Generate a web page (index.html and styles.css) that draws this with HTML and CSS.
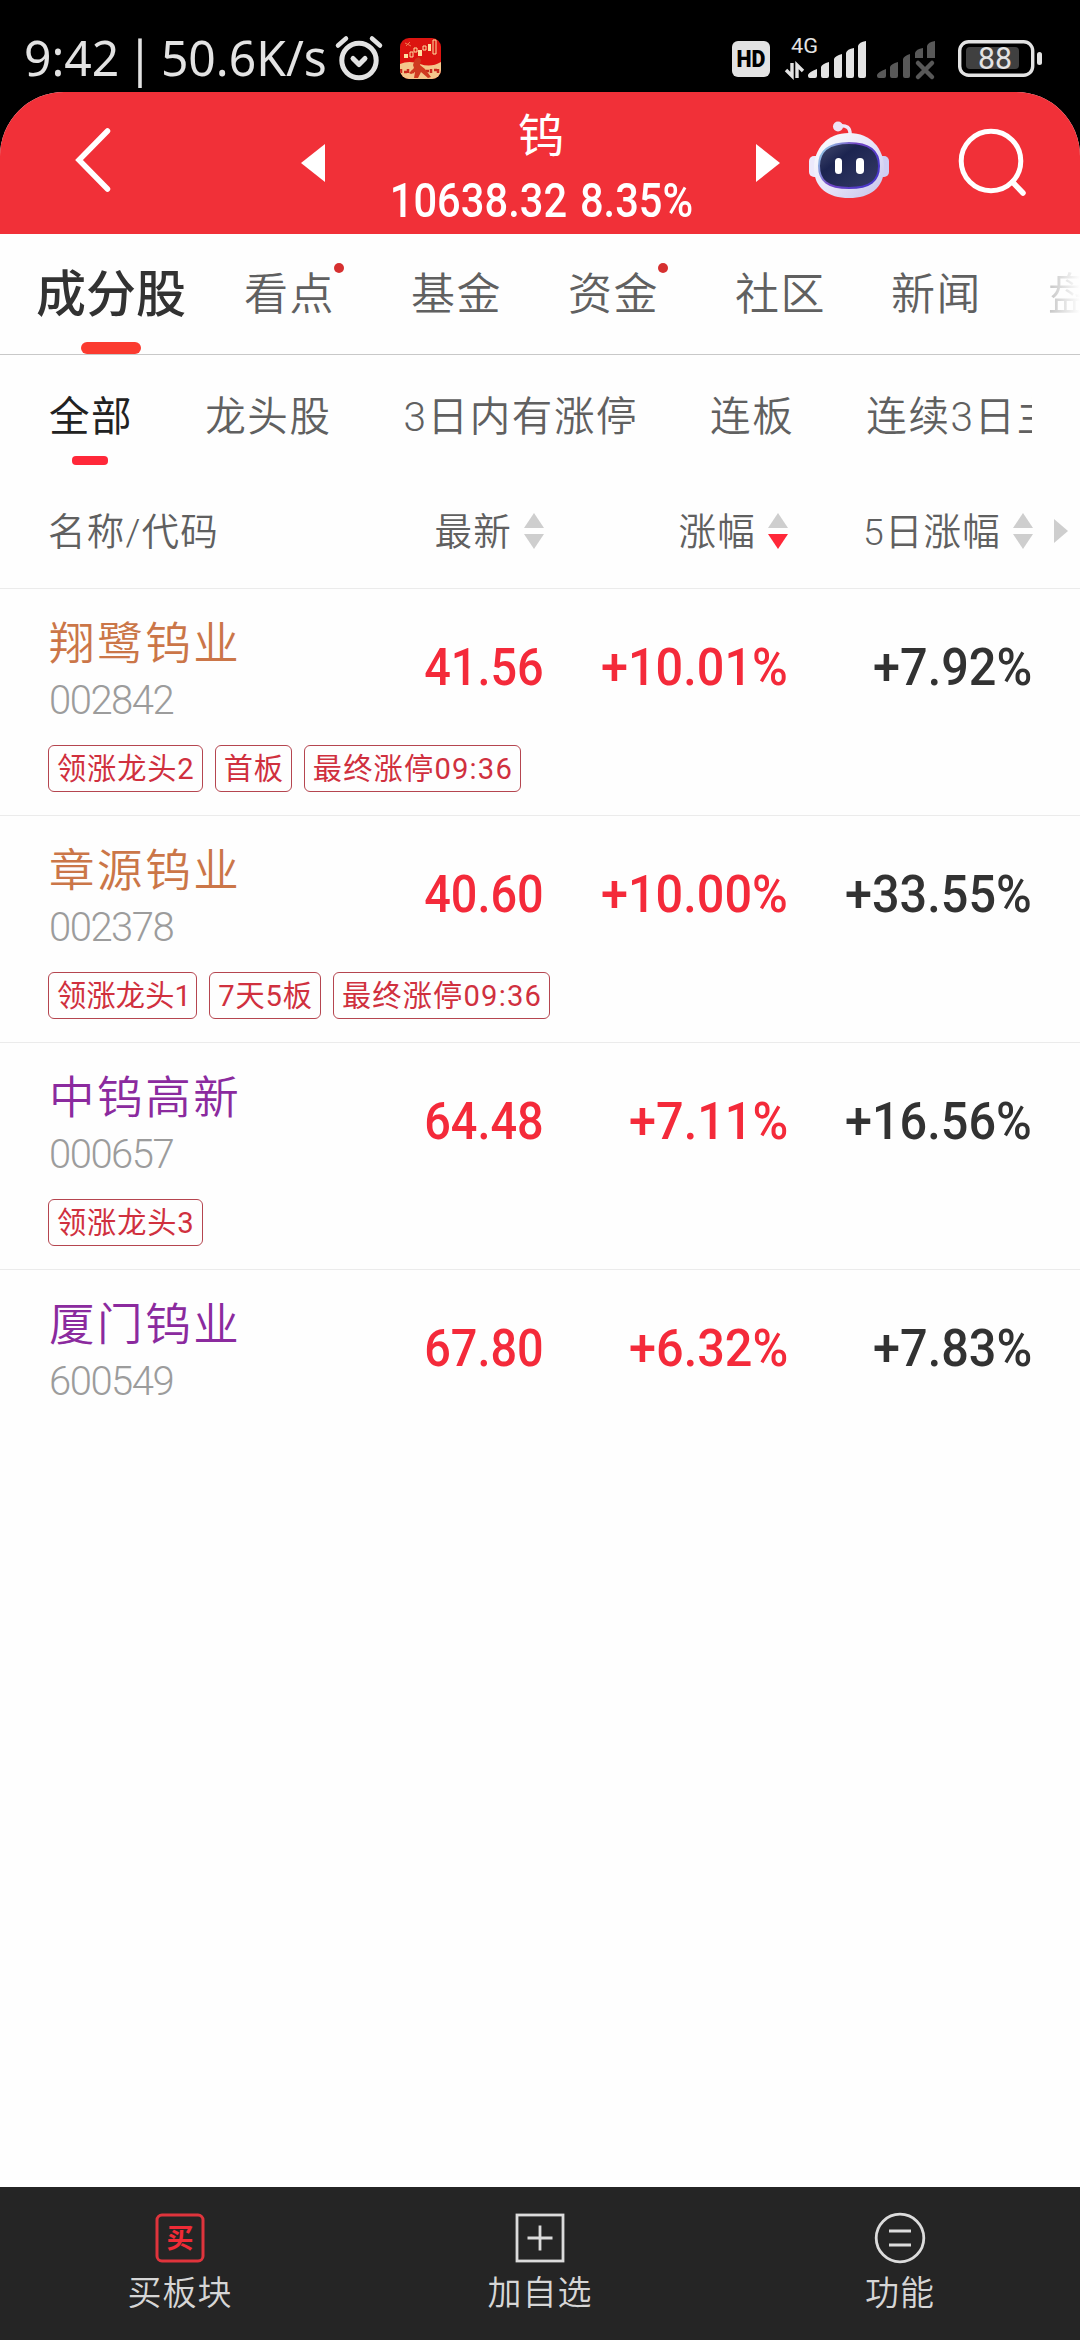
FILE: index.html
```html
<!DOCTYPE html>
<html lang="zh-CN">
<head>
<meta charset="utf-8">
<title>钨</title>
<link rel="stylesheet" href="styles.css">
</head>
<body>
<div class="phone">
  <div class="status">
    <span class="clock"><span class="clock-text">9:42 | 50.6K/s</span></span>
    <svg class="alarm" width="50" height="48" viewBox="0 0 50 48" fill="none" stroke="#e3e3e3" stroke-linecap="round" stroke-linejoin="round"><circle cx="25" cy="26.5" r="17.2" stroke-width="5"/><path d="M4 11.5L12 4.5M38 4.5L46 11.5" stroke-width="4.5"/><path d="M19 24.5l6 6 6-6" stroke-width="5"/></svg>
    <svg class="app" width="41" height="41" viewBox="0 0 41 41"><defs><clipPath id="r"><rect width="41" height="41" rx="9"/></clipPath></defs><g clip-path="url(#r)"><rect width="41" height="41" fill="#dc1410"/><path d="M0 26Q9 22 20 26T41 24V41H0z" fill="#f4c68b"/><path d="M1 31v4M4 34h3M8 31v4M11 34h3M26 33h3M31 31v4M34 32h3M38 31v4" fill="none" stroke="#c8281c" stroke-width="2.500"/><path d="M13 27l2-6 4-2 2 3-1 5 5 4 6 8-3 1-7-6-3 6h-4l1-6-4 2-2-1 5-5z" fill="#cf3a20"/><g fill="#ffe0a0"><path d="M4 16h4v4H4zM18 12h4v6h-4zM28 6h3v7h-3z"/></g><path d="M10 14h3v5h-3zM14 10h3v4h-3zM23 8h3v4h-3zM33 2h3v14h-3z" fill="none" stroke="#ffe0a0"/><path d="M5 5l6 3M6 8l4-4" stroke="#ef7d51"/></g></svg>
    <svg class="signals" width="320" height="48" viewBox="725 34 320 48">
      <rect x="731" y="41" width="38" height="36" rx="6" fill="#e3e3e3"/>
      <text x="750" y="67" class="hd" text-anchor="middle" textLength="29" lengthAdjust="spacingAndGlyphs">HD</text>
      <text x="790" y="53" class="net" textLength="27" lengthAdjust="spacingAndGlyphs">4G</text>
      <g fill="none" stroke="#e3e3e3" stroke-width="3.4"><path d="M791 63v13l-6-6M796 78V65l6 6"/></g>
      <g fill="#e3e3e3"><path d="M807 75q1-3 9-6v7q0 2-2 2h-5q-2 0-2-2zM820 67q1-3 8-5v14q0 2-2 2h-4q-2 0-2-2zM833 59q1-3 8-5v22q0 2-2 2h-4q-2 0-2-2zM845 53q1-4 8-5v28q0 2-2 2h-4q-2 0-2-2zM857 46q1-4 8-5v35q0 2-2 2h-4q-2 0-2-2z"/></g>
      <g fill="#585858"><path d="M876 75q1-3 9-6v7q0 2-2 2h-5q-2 0-2-2zM889 67q1-3 8-5v14q0 2-2 2h-4q-2 0-2-2zM902 59q1-3 7-5v22q0 2-2 2h-3q-2 0-2-2zM914 53q1-4 8-5v10h-8zM926 46q1-4 8-5v17h-8z"/></g>
      <path d="M917 63l14 14M931 63l-14 14" stroke="#585858" stroke-width="4.5" stroke-linecap="round"/>
      <rect x="958.7" y="41.7" width="73" height="33.6" rx="9" fill="none" stroke="#e3e3e3" stroke-width="3.4"/>
      <rect x="965" y="47" width="53" height="22" rx="4" fill="#404040"/>
      <rect x="1036" y="52" width="5" height="13" rx="2.5" fill="#e3e3e3"/>
      <text x="994" y="69" class="bat" text-anchor="middle" textLength="34" lengthAdjust="spacingAndGlyphs">88</text>
    </svg>
  </div>

  <div class="screen">
    <header class="titlebar">
      <svg class="back" width="40" height="70" viewBox="0 0 40 70"><path d="M34.500 6L6 35L34.500 64" fill="none" stroke="#fff" stroke-width="5.5" stroke-linecap="round" stroke-linejoin="miter"/></svg>
      <svg class="prev" width="24" height="38" viewBox="0 0 24 38"><path d="M24 0V38L0 19z" fill="#fff"/></svg>
      <div class="title"><span class="name">钨</span><span class="quote"><span class="quote-text">10638.32 8.35%</span></span></div>
      <svg class="next" width="24" height="38" viewBox="0 0 24 38"><path d="M0 0V38L24 19z" fill="#fff"/></svg>
      <svg class="robot" width="82" height="78" viewBox="0 0 82 78">
        <defs><linearGradient id="head" x1="0" y1="0" x2="1" y2="1"><stop offset="0" stop-color="#fff"/><stop offset=".55" stop-color="#e5e3f8"/><stop offset="1" stop-color="#c3c2ea"/></linearGradient>
        <linearGradient id="rim" x1="0" y1="0" x2="1" y2=".5"><stop offset="0" stop-color="#9be6ee"/><stop offset=".5" stop-color="#7346c4"/><stop offset="1" stop-color="#4937c8"/></linearGradient>
        <linearGradient id="face" x1="0" y1="0" x2="1" y2="1"><stop offset="0" stop-color="#454c70"/><stop offset=".35" stop-color="#1c2450"/><stop offset="1" stop-color="#353b66"/></linearGradient></defs>
        <path d="M30 5q13-2 12 9" fill="none" stroke="#f0e8fa" stroke-width="3.5"/><circle cx="30" cy="5.500" r="5" fill="#eee3f6"/>
        <rect x="1" y="35" width="13" height="21" rx="5" fill="#ece9fb"/><rect x="68" y="35" width="13" height="21" rx="5" fill="#cfcef4"/>
        <path d="M41 12C63 12 76 28 76 47C76 67 62 77 41 77C20 77 6 67 6 47C6 28 19 12 41 12z" fill="url(#head)"/>
        <path d="M41 22C62 22 71 30 71 45C71 60 62 67 41 67C20 67 11 60 11 45C11 30 20 22 41 22z" fill="url(#face)" stroke="url(#rim)" stroke-width="2"/>
        <rect x="27" y="37" width="7" height="16" rx="3.500" fill="#fff"/><rect x="48" y="37" width="8" height="16" rx="3.800" fill="#fff"/>
      </svg>
      <svg class="search" width="70" height="72" viewBox="0 0 70 72" fill="none" stroke="#fff"><circle cx="34" cy="35" r="29.800" stroke-width="5"/><path d="M55.500 56L66 67" stroke-width="5.500" stroke-linecap="round"/></svg>
    </header>

    <nav class="tabs">
      <span class="tab active">成分股</span><span class="tab kd dot">看点</span><span class="tab jj">基金</span><span class="tab zj dot">资金</span><span class="tab sq">社区</span><span class="tab xw">新闻</span><span class="tab last">盘</span>
    </nav>
    <nav class="filters">
      <span class="filter on">全部</span><span class="filter">龙头股</span><span class="filter">3日内有涨停</span><span class="filter">连板</span><span class="filter">连续3日主</span>
    </nav>

    <div class="cols head">
      <span class="h">名称/代码</span>
      <span class="h r">最新<svg class="sort" width="20" height="36" viewBox="0 0 20 36"><path d="M10 0L20 15H0z"/><path d="M0 21H20L10 36z"/></svg></span>
      <span class="h r">涨幅<svg class="sort" width="20" height="36" viewBox="0 0 20 36"><path d="M10 0L20 15H0z"/><path class="hot" d="M0 21H20L10 36z"/></svg></span>
      <span class="h r">5日涨幅<svg class="sort" width="20" height="36" viewBox="0 0 20 36"><path d="M10 0L20 15H0z"/><path d="M0 21H20L10 36z"/></svg></span>
      <svg class="more" width="14" height="24" viewBox="0 0 14 24"><path d="M0 0L14 12L0 24z"/></svg>
    </div>

    <main class="list">
      <article class="row">
        <div class="cols"><div class="stock"><b class="orange">翔鹭钨业</b><i>002842</i></div><span class="num price">41.56</span><span class="num up">+10.01%</span><span class="num">+7.92%</span></div>
        <div class="tags"><span>领涨龙头2</span><span>首板</span><span class="time">最终涨停09:36</span></div>
      </article>
      <article class="row">
        <div class="cols"><div class="stock"><b class="orange">章源钨业</b><i>002378</i></div><span class="num price">40.60</span><span class="num up">+10.00%</span><span class="num">+33.55%</span></div>
        <div class="tags"><span class="slim">领涨龙头1</span><span>7天5板</span><span class="time">最终涨停09:36</span></div>
      </article>
      <article class="row">
        <div class="cols"><div class="stock"><b class="purple">中钨高新</b><i>000657</i></div><span class="num price">64.48</span><span class="num up">+7.11%</span><span class="num">+16.56%</span></div>
        <div class="tags"><span>领涨龙头3</span></div>
      </article>
      <article class="row">
        <div class="cols"><div class="stock"><b class="purple">厦门钨业</b><i>600549</i></div><span class="num price">67.80</span><span class="num up">+6.32%</span><span class="num">+7.83%</span></div>
      </article>
    </main>

    <footer class="bottom">
      <div class="act"><svg width="52" height="52" viewBox="0 0 52 52"><rect x="3" y="3" width="46" height="46" rx="5" fill="none" stroke="#df343c" stroke-width="3"/><text x="26" y="36" class="buy" text-anchor="middle">买</text></svg><span>买板块</span></div>
      <div class="act"><svg width="52" height="52" viewBox="0 0 52 52" fill="none" stroke="#dcdcdc" stroke-width="2.800"><rect x="3" y="3" width="46" height="46"/><path d="M26 13.500V38.500M13.500 26H38.500"/></svg><span>加自选</span></div>
      <div class="act"><svg width="52" height="52" viewBox="0 0 52 52" fill="none" stroke="#dcdcdc" stroke-width="2.800"><circle cx="26" cy="26" r="23.800"/><path d="M15 19H37M15 33H37"/></svg><span>功能</span></div>
    </footer>
  </div>
</div>
</body>
</html>
```
FILE: styles.css
```css
* { box-sizing: border-box; }
body { margin: 0; background: #000; }
.phone {
  width: 1080px; height: 2340px; overflow: hidden;
  display: flex; flex-direction: column;
  font-family: Roboto, "Noto Sans CJK SC", sans-serif; font-weight: 350;
  color: #323232;
}
svg { display: block; flex: none; }

.status { height: 92px; padding: 34px 34px 0 24px; display: flex; align-items: flex-start; color: #e3e3e3; }
.clock { width: 310px; height: 48px; line-height: 46px; white-space: nowrap; }
.clock-text { display: inline-block; font-family: "Noto Sans", sans-serif; font-weight: 400; font-size: 49px; word-spacing: -5px; transform-origin: 0 50%; transform: scaleX(.98); }
.app { margin: 4px 0 0 16px; }
.signals { margin-left: auto; }
.hd { font: 900 23px Roboto, sans-serif; fill: #000; }
.net { font: 400 21px Roboto, sans-serif; fill: #e3e3e3; }
.bat { font: 400 31px Roboto, sans-serif; fill: #e3e3e3; }

.screen { flex: 1; background: #fefefe; border-radius: 64px 64px 0 0; overflow: hidden; display: flex; flex-direction: column; }
.titlebar { height: 142px; flex: none; background: #f13038; color: #fff; display: flex; align-items: flex-start; padding-left: 73px; }
.back { margin-top: 33px; }
.prev { margin: 52px 0 0 188px; }
.title { width: 432px; display: flex; flex-direction: column; align-items: center; }
.name { font-size: 46px; line-height: 54px; margin-top: 17px; font-weight: 400; }
.quote { height: 50px; line-height: 50px; margin-top: 13px; white-space: nowrap; width: 300px; display: flex; justify-content: center; }
.quote-text { font-weight: 500; font-size: 49px; word-spacing: 3px; transform: scaleX(.85); }
.next { margin: 52px 0 0 -1px; }
.robot { margin: 29px 0 0 28px; }
.search { margin: 34px 0 0 67px; }

.tabs {
  height: 121px; flex: none; border-bottom: 1px solid #c8c8c8;
  display: flex; padding-left: 36px; line-height: 123px; font-size: 44px; letter-spacing: 1.500px; color: #606060; white-space: nowrap;
}
.tab { flex: none; position: relative; }
.tab.active { width: 208px; font-size: 50px; font-weight: 500; letter-spacing: 0; color: #323232; }
.tab.active::after { content: ""; position: absolute; left: 45px; bottom: 0; width: 60px; height: 12px; border-radius: 6px; background: #fb3b30; }
.kd { width: 167px; } .jj { width: 157px; } .zj { width: 167px; } .sq { width: 156px; } .xw { width: 157px; }
.last { width: 32px; overflow: hidden; background: linear-gradient(90deg, #c4c4c4, #fefefe); -webkit-background-clip: text; background-clip: text; color: transparent; }
.dot::after { content: ""; position: absolute; left: 90px; top: 29px; width: 10px; height: 10px; border-radius: 50%; background: #d63030; }

.filters { height: 122px; flex: none; margin: 0 48px 0 49px; overflow: hidden; display: flex; gap: 72px; line-height: 125px; font-size: 40.500px; letter-spacing: 1.600px; color: #606060; white-space: nowrap; }
.filter { flex: none; position: relative; }
.filter.on { font-weight: 400; color: #222; }
.filter.on::after { content: ""; position: absolute; left: 23px; top: 101px; width: 36px; height: 9px; border-radius: 4px; background: #ff2839; }

.cols { display: grid; grid-template-columns: 251px 245px 244px 244px 1fr; padding-left: 48px; }
.head { height: 112px; flex: none; align-items: center; border-bottom: 1px solid #ebebeb; font-size: 37.500px; letter-spacing: 1.200px; color: #606060; }
.h { line-height: 54px; margin-top: -2px; white-space: nowrap; }
.head.cols { grid-template-columns: 251px 245px 244px 245px 1fr; }
.r { display: flex; justify-content: flex-end; align-items: center; gap: 12px; }
.sort { margin-top: -1px; }
.sort, .more { fill: #cecece; }
.sort .hot { fill: #ff2839; }
.more { margin: -3px 0 0 21px; }

.list { flex: 1; }
.row { height: 227px; border-bottom: 1px solid #ebebeb; padding-top: 26px; }
.row:last-child { border: 0; }
.stock { display: flex; flex-direction: column; height: 112px; padding-left: 1px; white-space: nowrap; }
.stock b { font-size: 45.500px; line-height: 60px; font-weight: 350; letter-spacing: 2.600px; }
.stock i { font-style: normal; font-size: 40px; line-height: 52px; letter-spacing: -1.500px; color: #9c9c9c; }
.orange { color: #cb7648; }
.purple { color: #8b2a9e; }
.num { justify-self: end; height: 110px; line-height: 106px; font-size: 52px; font-weight: 500; transform: scaleX(.935); transform-origin: 100% 50%; white-space: nowrap; color: #323232; }
.num.up, .num.price { color: #f42a3a; }
.num.price { transform: scaleX(.9); }
.tags { display: flex; gap: 12px; padding: 18px 0 0 48px; }
.tags span { height: 47px; line-height: 46px; border: 1px solid #b5454f; border-radius: 6px; padding: 0 7px 0 8px; font-size: 29.200px; font-weight: 400; letter-spacing: .9px; color: #d0303e; white-space: nowrap; }
.tags .slim { letter-spacing: .2px; padding: 0 5px 0 8px; }
.tags .time { letter-spacing: 1.200px; }

.bottom { height: 153px; flex: none; background: #252525; display: flex; }
.act { flex: 1; display: flex; flex-direction: column; align-items: center; padding-top: 25px; color: #d6d6d6; font-size: 34px; letter-spacing: 1px; }
.act span { line-height: 50px; margin-top: 4px; }
.buy { font: 700 27px "Noto Sans CJK SC", sans-serif; fill: #f02b36; letter-spacing: 0; }
```
